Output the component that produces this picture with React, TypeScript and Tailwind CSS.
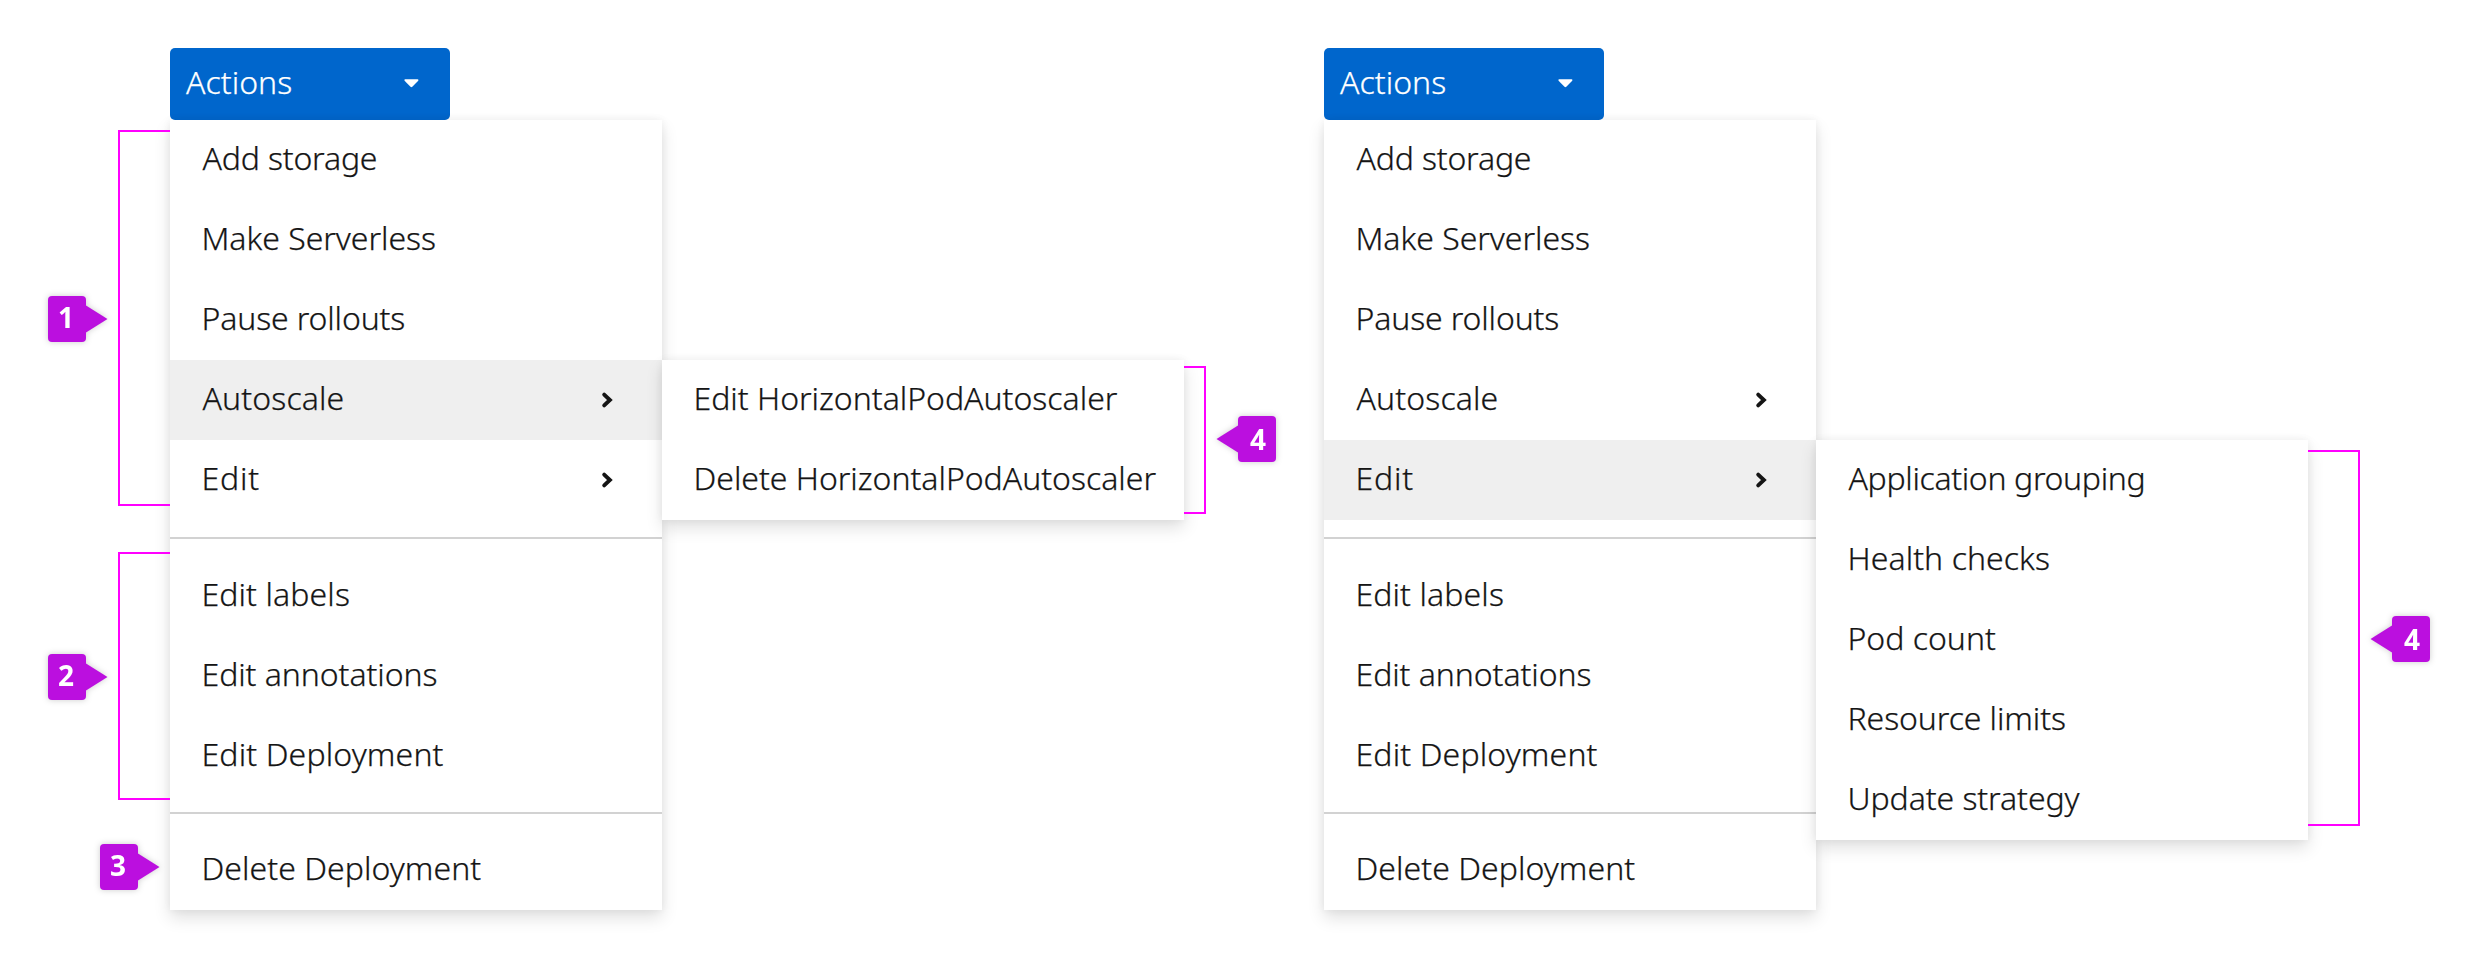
import React from 'react';

type Item = { label: string; fit: string; arrow?: boolean; active?: boolean };

const PANEL =
  'bg-white shadow-[0_8px_16px_rgba(3,3,3,0.12),0_0_8px_rgba(3,3,3,0.06)]';

function Row({ label, fit, arrow, active }: Item) {
  return (
    <li
      className={`flex h-20 items-center justify-between pl-8 pr-[49px] ${active ? 'bg-[#efefef]' : ''}`}
    >
      <span className={`whitespace-nowrap pb-[5px] leading-none ${fit}`}>{label}</span>
      {arrow && (
        <svg width="12" height="18" viewBox="0 0 12 18" fill="none" className="shrink-0">
          <path
            d="M3.2 3.6 L8.9 9 L3.2 14.4"
            stroke="#151515"
            strokeWidth="3.9"
            strokeLinecap="round"
            strokeLinejoin="miter"
          />
        </svg>
      )}
    </li>
  );
}

function List({ items }: { items: Item[] }) {
  return (
    <ul>
      {items.map((item) => (
        <Row key={item.label} {...item} />
      ))}
    </ul>
  );
}

function ActionsMenu({ active }: { active: string }) {
  const first: Item[] = [
    { label: 'Add storage', fit: 'ml-[0.5px] tracking-[-0.18px]' },
    { label: 'Make Serverless', fit: '-ml-[0.5px] tracking-[-0.03px]' },
    { label: 'Pause rollouts', fit: '-ml-[0.5px] tracking-[-0.14px]' },
    { label: 'Autoscale', fit: 'ml-[0.5px] tracking-[0.12px]', arrow: true },
    { label: 'Edit', fit: '-ml-[0.5px] tracking-[0.8px]', arrow: true },
  ];
  return (
    <div className="w-[492px] shrink-0 pt-12">
      <button className="flex h-[72px] w-[280px] items-center justify-between rounded-[5px] bg-[#0066cc] pl-4 pr-[31px] text-white">
        <span className="pb-[5px] leading-none tracking-[0.04px]">Actions</span>
        <svg width="15" height="9" viewBox="0 0 15 9" className="mb-[1px]">
          <path
            d="M1.2 0.2 H13.6 Q15 0.6 14 1.9 L8.3 7.8 Q7.4 8.5 6.5 7.8 L0.8 1.9 Q-0.2 0.6 1.2 0.2 Z"
            fill="#fff"
          />
        </svg>
      </button>
      <div className={`h-[790px] ${PANEL}`}>
        <List items={first.map((item) => ({ ...item, active: item.label === active }))} />
        <hr className="mt-[17px] border-t-2 border-[#d2d2d2]" />
        <div className="pt-[17px]">
          <List
            items={[
              { label: 'Edit labels', fit: '-ml-[0.5px] tracking-[0.1px]' },
              { label: 'Edit annotations', fit: '-ml-[0.5px] tracking-[-0.07px]' },
              { label: 'Edit Deployment', fit: '-ml-[0.5px] tracking-[0.14px]' },
            ]}
          />
        </div>
        <hr className="mt-4 border-t-2 border-[#d2d2d2]" />
        <div className="pt-4">
          <List items={[{ label: 'Delete Deployment', fit: '-ml-[0.5px] tracking-[0.05px]' }]} />
        </div>
      </div>
    </div>
  );
}

function Marker({ n, side }: { n: number; side: 'left' | 'right' }) {
  const pointer = (
    <svg width="22" height="28" viewBox="0 0 22 28" className="shrink-0">
      <path d={side === 'left' ? 'M0 0.5 L21.5 14 L0 27.5 Z' : 'M22 0.5 L0.5 14 L22 27.5 Z'} fill="#bb0fdf" />
    </svg>
  );
  return (
    <div className="flex h-[46px] w-[60px] shrink-0 items-center drop-shadow-[0_0_3px_rgba(0,0,0,0.2)]">
      {side === 'right' && pointer}
      <div
        className={`flex h-[46px] w-[38px] shrink-0 items-center justify-center rounded-[4px] bg-[#bb0fdf] text-[28px] leading-none font-bold text-white [-webkit-text-stroke:0px] ${side === 'left' ? 'pr-[2px] pb-[4px]' : 'pl-[2px]'}`}
      >
        {n}
      </div>
      {side === 'left' && pointer}
    </div>
  );
}

export default function App() {
  return (
    <main className="flex h-[958px] w-[2478px] overflow-hidden bg-white font-['Noto_Sans',sans-serif] text-[32px] font-light text-[#151515] [-webkit-text-stroke:0.25px]">
      <div className="flex w-[170px] shrink-0 flex-col pt-[130px]">
        <div className="relative z-10 flex h-[376px] items-center justify-between pl-12">
          <div className="pt-[2px]"><Marker n={1} side="left" /></div>
          <div className="h-full w-[52px] border-2 border-r-0 border-[#ff00ff]" />
        </div>
        <div className="relative z-10 mt-[46px] flex h-[248px] items-center justify-between pl-12">
          <div className="pt-[2px]"><Marker n={2} side="left" /></div>
          <div className="h-full w-[52px] border-2 border-r-0 border-[#ff00ff]" />
        </div>
        <div className="mt-11 pl-[100px]">
          <Marker n={3} side="left" />
        </div>
      </div>

      <ActionsMenu active="Autoscale" />

      <div className="flex w-[662px] shrink-0 items-start pt-[360px]">
        <div className={`w-[522px] ${PANEL}`}>
          <List
            items={[
              { label: 'Edit HorizontalPodAutoscaler', fit: '-ml-[0.5px] tracking-[-0.01px]' },
              { label: 'Delete HorizontalPodAutoscaler', fit: '-ml-[0.5px] tracking-[-0.02px]' },
            ]}
          />
        </div>
        <div className="relative z-10 mt-[6px] flex h-[148px] items-center gap-[10px]">
          <div className="h-full w-[22px] border-2 border-l-0 border-[#ff00ff]" />
          <div className="pb-[2px]"><Marker n={4} side="right" /></div>
        </div>
      </div>

      <ActionsMenu active="Edit" />

      <div className="flex shrink-0 items-start pt-[440px]">
        <div className={`w-[492px] ${PANEL}`}>
          <List
            items={[
              { label: 'Application grouping', fit: 'ml-[0.5px] tracking-[-0.34px]' },
              { label: 'Health checks', fit: '-ml-[0.5px] tracking-[0.06px]' },
              { label: 'Pod count', fit: '-ml-[0.5px]' },
              { label: 'Resource limits', fit: '-ml-[0.5px] tracking-[-0.1px]' },
              { label: 'Update strategy', fit: '-ml-[0.5px] tracking-[-0.08px]' },
            ]}
          />
        </div>
        <div className="relative z-10 mt-[10px] flex h-[376px] items-center gap-[10px]">
          <div className="h-full w-[52px] border-2 border-l-0 border-[#ff00ff]" />
          <div className="pt-[2px]"><Marker n={4} side="right" /></div>
        </div>
      </div>
    </main>
  );
}
